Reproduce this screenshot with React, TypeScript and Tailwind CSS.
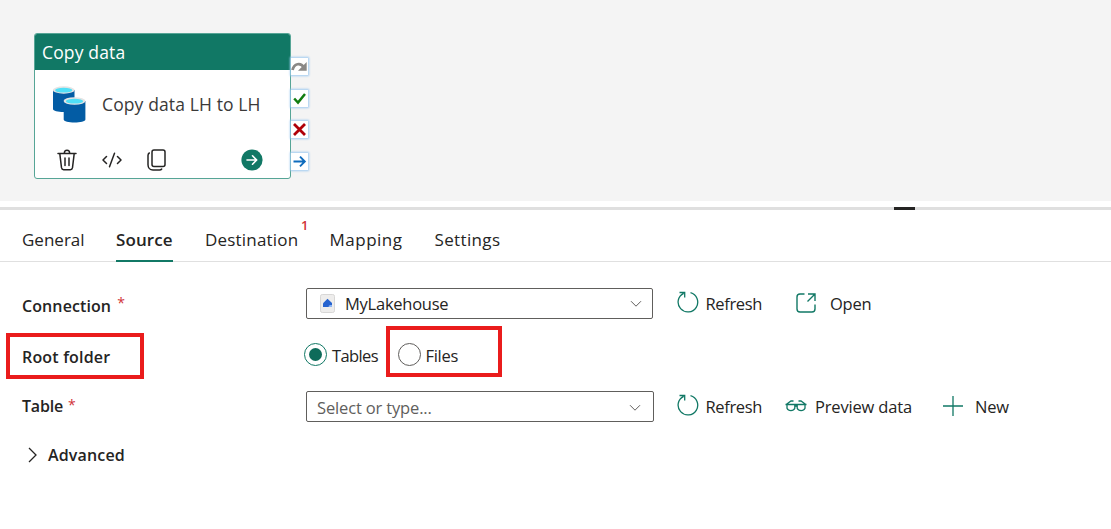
import type { ReactNode } from "react";

function CopyDataIcon() {
  return (
    <svg width="34" height="37" viewBox="0 0 34 37" className="shrink-0">
      <path d="M1 4v19c0 2 5 3 10.500 3s11-1 11-3V4z" fill="#035ca4" />
      <ellipse cx="11.700" cy="4" rx="10.900" ry="3.700" fill="#e4e4e4" />
      <ellipse cx="11.700" cy="4.200" rx="8.600" ry="2.400" fill="#50e0f7" />
      <path d="M11.700 15v18.500c0 2 5 3 10.700 3s11-1 11-3V15z" fill="#035ca4" />
      <ellipse cx="22.500" cy="15" rx="10.900" ry="3.800" fill="#e4e4e4" />
      <ellipse cx="22.500" cy="15.200" rx="8.600" ry="2.400" fill="#50e0f7" />
    </svg>
  );
}

function TrashIcon() {
  return (
    <svg width="20" height="22" viewBox="0 0 20 22" fill="none" stroke="#252423" strokeWidth="1.500" strokeLinecap="round">
      <path d="M1 4.500h18M7.300 4.300C7.300 .2 12.700 .2 12.700 4.300M2.800 4.700l1.700 14c.2 1.300.8 2 2.100 2h6.800c1.300 0 1.900-.7 2.100-2l1.700-14M8 9v7.500M12 9v7.500" />
    </svg>
  );
}

function CodeIcon() {
  return (
    <svg width="20" height="16" viewBox="0 0 20 16" fill="none" stroke="#252423" strokeWidth="1.500" strokeLinecap="round" strokeLinejoin="round">
      <path d="M4.500 4.500 1 8l3.500 3.500M15.500 4.500 19 8l-3.500 3.500M12.500 1.300 7.500 14.700" />
    </svg>
  );
}

function CopyIcon() {
  return (
    <svg width="19" height="22" viewBox="0 0 19 22" fill="none" stroke="#252423" strokeWidth="1.500" strokeLinecap="round">
      <rect x="5" y="1" width="13" height="16.500" rx="2" />
      <path d="M2.300 4C1.300 4.600 1 5.400 1 6.500v9.200c0 3 2 5.300 5 5.300h6.500c1 0 1.800-.4 2.200-1" />
    </svg>
  );
}

function RunIcon() {
  return (
    <svg width="22" height="22" viewBox="0 0 22 22" fill="none">
      <circle cx="11" cy="11" r="10.600" fill="#117865" />
      <path d="M6 11h9.500M11.500 6.800l4.200 4.200-4.200 4.200" stroke="#fff" strokeWidth="1.600" strokeLinecap="round" strokeLinejoin="round" />
    </svg>
  );
}

function Port({ children }: { children: ReactNode }) {
  return (
    <div className="h-[17px] w-[17px] bg-white shadow-[0_0_2px_1px_#9fcaf0]">
      <svg width="17" height="17" viewBox="0 0 17 17" fill="none">
        {children}
      </svg>
    </div>
  );
}

function Ports() {
  return (
    <div className="mt-[25px] flex flex-col gap-[14.600px]">
      <Port>
        <path d="M1.500 12C3 5.500 9.500 4 13 9.500" stroke="#8a8886" strokeWidth="2.800" />
        <path d="M15.700 4v8.700H7z" fill="#8a8886" />
      </Port>
      <Port>
        <path d="M3.200 8.500 7 12.500 14 4" stroke="#107c10" strokeWidth="2.500" />
      </Port>
      <Port>
        <path d="m3 3 11 11M14 3 3 14" stroke="#b00008" strokeWidth="2.800" />
      </Port>
      <Port>
        <path d="M2.500 8.500h11M9 3.700l4.800 4.800L9 13.300" stroke="#0f6cbd" strokeWidth="1.900" />
      </Port>
    </div>
  );
}

function Activity() {
  return (
    <div className="flex items-start">
      <div className="h-[146px] w-[257px] overflow-hidden rounded-[3px] border-[1.500px] border-[#56a596] bg-white">
        <div className="flex h-9 items-center bg-[#117865] pt-px pl-[7px] text-[17.500px] text-white">
          <span className="tracking-[0.150px]">Copy data</span>
        </div>
        <div className="flex h-[69px] items-center pl-[17px]">
          <CopyDataIcon />
          <span className="mb-px ml-4 text-[17.500px] tracking-[0.120px] text-[#3b3a39]">Copy data LH to LH</span>
        </div>
        <div className="flex h-[39px] items-center pt-[2px] pl-[22px]">
          <TrashIcon />
          <div className="ml-[25px]"><CodeIcon /></div>
          <div className="ml-[25px]"><CopyIcon /></div>
          <div className="ml-[75px]"><RunIcon /></div>
        </div>
      </div>
      <Ports />
    </div>
  );
}

function Tabs() {
  return (
    <nav className="flex h-[52px] items-stretch border-b border-[#e0e0e0] pl-[22px] text-[17px] leading-[60px]">
      <div className="w-[94px]">General</div>
      <div className="relative w-[57px] font-semibold tracking-[0.100px]">
        Source
        <span className="absolute -bottom-px left-0 h-0.5 w-[57px] bg-[#117865]" />
      </div>
      <div className="relative ml-8 w-[124.500px] tracking-[0.200px]">
        Destination
        <span className="absolute top-[7px] left-24 text-[13px] leading-4 font-semibold tracking-normal text-[#d13438]">1</span>
      </div>
      <div className="w-[105px] tracking-[0.500px]">Mapping</div>
      <div className="tracking-[0.350px]">Settings</div>
    </nav>
  );
}

function RefreshIcon() {
  return (
    <svg width="22" height="22" viewBox="0 0 22 22" fill="none" stroke="#117865" strokeWidth="1.300" className="shrink-0">
      <path d="M13.500 1.700A9.800 9.800 0 1 1 6.700 2.300M2.500 1.500h5.200v5" />
    </svg>
  );
}

function OpenIcon() {
  return (
    <svg width="20" height="20" viewBox="0 0 20 20" fill="none" stroke="#117865" strokeWidth="1.400" className="mb-0.5 shrink-0">
      <path d="M8.500 1H4Q1 1 1 4v12q0 3 3 3h12q3 0 3-3v-4.500M12 1h7v7M19 1l-7.500 7.500" />
    </svg>
  );
}

function GlassesIcon() {
  return (
    <svg width="22" height="13" viewBox="0 0 22 13" fill="none" stroke="#117865" strokeWidth="1.300" className="shrink-0">
      <path d="M.5 4.500h21M2 4.500v3.700a4.200 3.800 0 0 0 7.800 0V4.500M12.200 4.500v3.700a4.200 3.800 0 0 0 7.800 0V4.500M9.800 6.500q1.200-1 2.400 0M1.500 4.200 6 1h2.500M20.500 4.200 16 1h-2.500" />
    </svg>
  );
}

function ChevronDown() {
  return (
    <svg width="12" height="8" viewBox="0 0 12 8" fill="none" stroke="#605e5c" strokeWidth="1">
      <path d="m1 1.200 5 5 5-5" />
    </svg>
  );
}

function LakehouseIcon() {
  return (
    <svg width="15" height="19" viewBox="0 0 15 19" className="shrink-0">
      <rect x=".5" y=".5" width="14" height="18" rx="1.800" fill="#eeedec" stroke="#d8d7d6" />
      <path d="M3 13V9.300l4.500-4.500L12 9v4z" fill="#2764cf" />
      <path d="M8.500 13q0-2 2-2H12v2z" fill="#8fb6f4" />
    </svg>
  );
}

function Star({ className }: { className: string }) {
  return <span className={`text-[14px] leading-4 font-normal text-[#d13438] ${className}`}>*</span>;
}

function Form() {
  return (
    <section className="pt-[26px] text-[16.500px]">
      <div className="flex h-[31px] items-center">
        <div className="flex w-[306px] items-center pt-1 pl-[22px] font-semibold">
          <span className="text-[16px] tracking-[0.100px]">Connection</span>
          <Star className="-mt-1.5 ml-1.5" />
        </div>
        <div className="flex h-[31px] w-[347px] items-center rounded-[2px] border border-[#605e5c] pl-[13px]">
          <LakehouseIcon />
          <span className="mt-0.5 ml-2.5 tracking-[-0.250px]">MyLakehouse</span>
          <div className="mr-[10px] ml-auto"><ChevronDown /></div>
        </div>
        <div className="ml-[23.500px] flex items-center">
          <div className="mb-1"><RefreshIcon /></div>
          <span className="mt-0.5 ml-[7px] w-[90.500px] tracking-[-0.350px]">Refresh</span>
          <OpenIcon />
          <span className="mt-0.5 ml-[14px] tracking-[-0.250px]">Open</span>
        </div>
      </div>

      <div className="mt-[7px] flex h-[51px] items-start">
        <div className="mt-[7px] ml-1.5 flex h-[46px] w-[138px] shrink-0 items-center border-4 border-[#ea1c1c] pt-0.5 pl-3 font-semibold">
          <span className="text-[16px] tracking-[0.180px]">Root folder</span>
        </div>
        <div className="ml-40 flex h-[51px] w-[82px] items-center pt-1.5">
          <span className="flex h-[23px] w-[23px] items-center justify-center rounded-full border border-[#117865]">
            <span className="h-[13px] w-[13px] rounded-full bg-[#0e6b5a]" />
          </span>
          <span className="mt-[3px] ml-[5px] tracking-[-0.600px]">Tables</span>
        </div>
        <div className="flex h-[51px] w-[116px] items-center border-4 border-[#ea1c1c] pt-1.5 pl-[7.500px]">
          <span className="h-[23px] w-[23px] rounded-full border border-[#605e5c]" />
          <span className="mt-[3px] ml-[5px] tracking-[-0.300px]">Files</span>
        </div>
      </div>

      <div className="mt-[14px] flex h-[31px] items-center">
        <div className="flex w-[306px] items-center pb-[2px] pl-[22px] font-semibold">
          <span className="text-[16px] tracking-[-0.200px]">Table</span>
          <Star className="-mt-0.5 ml-[5px]" />
        </div>
        <div className="flex h-[31px] w-[348px] items-center rounded-[2px] border border-[#605e5c] pt-[3px] pl-2.5 text-[#605e5c]">
          <span className="tracking-[-0.150px]">Select or type...</span>
          <div className="mr-[12px] ml-auto"><ChevronDown /></div>
        </div>
        <div className="ml-[22.500px] flex items-center">
          <div className="mb-1"><RefreshIcon /></div>
          <span className="mt-0.5 ml-[7px] w-[79.500px] tracking-[-0.350px]">Refresh</span>
          <GlassesIcon />
          <span className="mt-0.5 ml-2 w-32 tracking-[-0.170px]">Preview data</span>
          <svg width="20" height="20" viewBox="0 0 20 20" stroke="#117865" strokeWidth="1.300" className="mb-0.5">
            <path d="M0 10h20M10 0v20" />
          </svg>
          <span className="mt-0.5 ml-3 tracking-[-0.200px]">New</span>
        </div>
      </div>

      <div className="mt-[21px] flex h-[22px] items-center pt-px pl-7 font-semibold">
        <svg width="9" height="16" viewBox="0 0 9 16" fill="none" stroke="#252423" strokeWidth="1.300">
          <path d="m1 1 7 7-7 7" />
        </svg>
        <span className="ml-[11px] text-[16px] tracking-[0.150px]">Advanced</span>
      </div>
    </section>
  );
}

export default function App() {
  return (
    <div className="h-[529px] w-[1111px] overflow-hidden bg-white font-['Open_Sans','Noto_Sans',sans-serif] whitespace-nowrap text-[#252423]">
      <div className="h-[201px] bg-[#f4f4f4] pt-[33px] pl-[34px]">
        <Activity />
      </div>
      <div className="mt-1.5 h-[3px] bg-[#dfdfdf] pl-[894px]">
        <div className="h-[3px] w-[21px] bg-[#252423]" />
      </div>
      <Tabs />
      <Form />
    </div>
  );
}
